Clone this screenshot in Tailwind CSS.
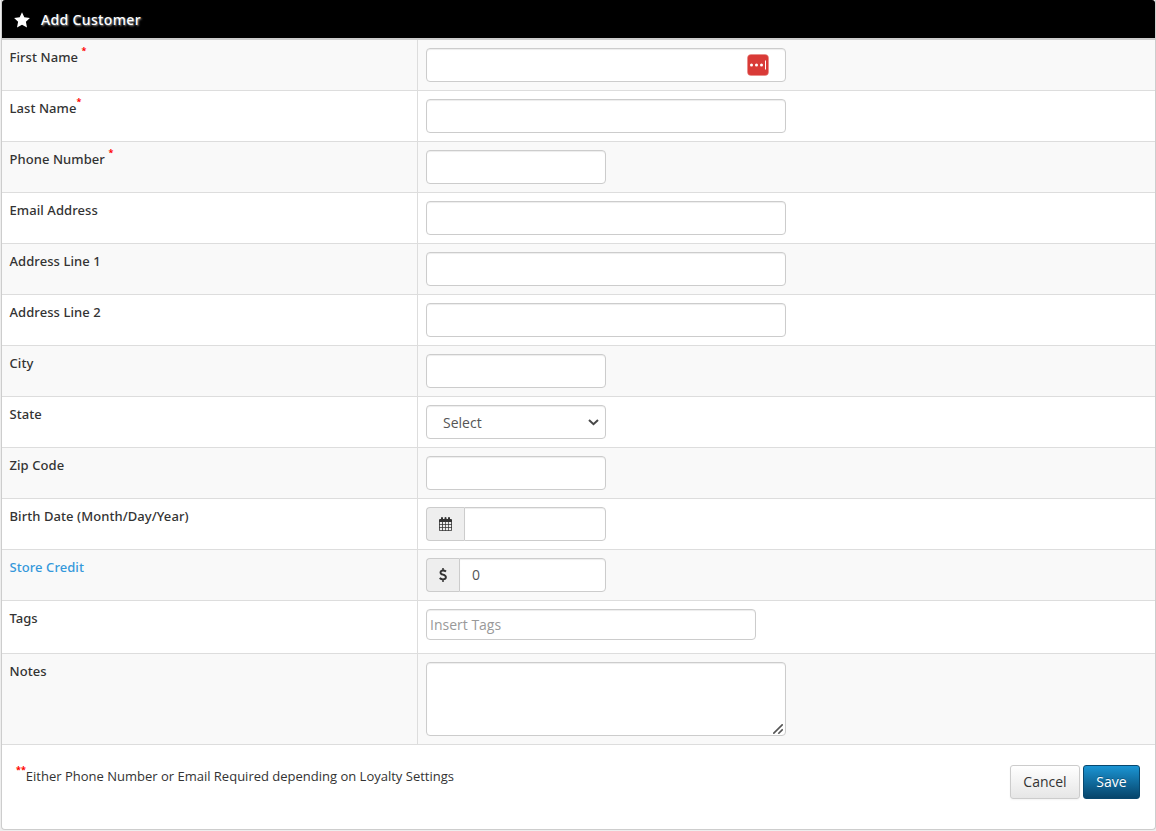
<!DOCTYPE html>
<html lang="en">
<head>
  <meta charset="UTF-8" />
  <meta name="viewport" content="width=device-width, initial-scale=1.0" />
  <title>Add Customer</title>
  <script src="https://cdn.jsdelivr.net/npm/@tailwindcss/browser@4"></script>
</head>
<body class="bg-[#eeeeee] font-['Open_Sans','Noto_Sans',sans-serif] text-[13px] leading-5 text-[#333333] h-[831px] overflow-hidden pl-px">

  <div class="h-[830px] border border-t-0 border-[#cdcdcd] rounded-b bg-white">

    <!-- Header -->
    <header class="h-10 bg-black border-b-2 border-[#cdcdcd] rounded-t-[3px] flex items-center pl-3">
      <svg class="w-4 h-4 mt-px" viewBox="0 0 16 16" fill="#fff"><path d="M8 .3l2.300 5 5.600.7-4 3.800 1.100 5.800L8 12.800l-5 2.800 1.100-5.800L.1 6l5.600-.7z" /></svg>
      <h1 class="ml-[11px] pt-px font-['Noto_Sans',sans-serif] text-[14px] tracking-[0.35px] font-medium text-white [text-shadow:1px_1px_2px_#999]">Add Customer</h1>
    </header>

    <!-- Form -->
    <form>
      <div class="flex h-[51px] border-b border-[#dddddd] bg-[#f9f9f9]">
        <label class="w-[416px] border-r border-[#dddddd] pl-[7.5px] pt-[7px] font-['Noto_Sans',sans-serif] tracking-[0.07px] font-medium">First Name <sup class="text-[#ff0000] text-[9px] font-bold -top-[8px]">*</sup></label>
        <div class="relative p-2">
          <input type="text" class="block w-[360px] h-[34px] border border-[#cccccc] rounded bg-white shadow-[inset_0_1px_1px_rgba(0,0,0,0.075)]" />
          <svg class="absolute left-[329px] top-[14px] w-[22px] h-[22px]" viewBox="0 0 22 22"><rect x=".5" y=".5" width="21" height="21" rx="3.5" fill="#d93a37" stroke="#e8827f" stroke-width=".5" /><g fill="#fff"><circle cx="4.500" cy="11" r="1.500" /><circle cx="9.500" cy="11" r="1.500" /><circle cx="14.500" cy="11" r="1.500" /><rect x="18" y="6.500" width="1" height="9" /></g></svg>
        </div>
      </div>
      <div class="flex h-[51px] border-b border-[#dddddd]">
        <label class="w-[416px] border-r border-[#dddddd] pl-[7.5px] pt-[7px] font-['Noto_Sans',sans-serif] tracking-[0.07px] font-medium">Last Name<sup class="text-[#ff0000] text-[9px] font-bold -top-[8px]">*</sup></label>
        <div class="p-2"><input type="text" class="block w-[360px] h-[34px] border border-[#cccccc] rounded bg-white shadow-[inset_0_1px_1px_rgba(0,0,0,0.075)]" /></div>
      </div>
      <div class="flex h-[51px] border-b border-[#dddddd] bg-[#f9f9f9]">
        <label class="w-[416px] border-r border-[#dddddd] pl-[7.5px] pt-[7px] font-['Noto_Sans',sans-serif] tracking-[0.07px] font-medium">Phone Number <sup class="text-[#ff0000] text-[9px] font-bold -top-[8px]">*</sup></label>
        <div class="p-2"><input type="text" class="block w-[180px] h-[34px] border border-[#cccccc] rounded bg-white shadow-[inset_0_1px_1px_rgba(0,0,0,0.075)]" /></div>
      </div>
      <div class="flex h-[51px] border-b border-[#dddddd]">
        <label class="w-[416px] border-r border-[#dddddd] pl-[7.5px] pt-[7px] font-['Noto_Sans',sans-serif] tracking-[0.07px] font-medium">Email Address</label>
        <div class="p-2"><input type="text" class="block w-[360px] h-[34px] border border-[#cccccc] rounded bg-white shadow-[inset_0_1px_1px_rgba(0,0,0,0.075)]" /></div>
      </div>
      <div class="flex h-[51px] border-b border-[#dddddd] bg-[#f9f9f9]">
        <label class="w-[416px] border-r border-[#dddddd] pl-[7.5px] pt-[7px] font-['Noto_Sans',sans-serif] tracking-[0.07px] font-medium">Address Line 1</label>
        <div class="p-2"><input type="text" class="block w-[360px] h-[34px] border border-[#cccccc] rounded bg-white shadow-[inset_0_1px_1px_rgba(0,0,0,0.075)]" /></div>
      </div>
      <div class="flex h-[51px] border-b border-[#dddddd]">
        <label class="w-[416px] border-r border-[#dddddd] pl-[7.5px] pt-[7px] font-['Noto_Sans',sans-serif] tracking-[0.07px] font-medium">Address Line 2</label>
        <div class="p-2"><input type="text" class="block w-[360px] h-[34px] border border-[#cccccc] rounded bg-white shadow-[inset_0_1px_1px_rgba(0,0,0,0.075)]" /></div>
      </div>
      <div class="flex h-[51px] border-b border-[#dddddd] bg-[#f9f9f9]">
        <label class="w-[416px] border-r border-[#dddddd] pl-[7.5px] pt-[7px] font-['Noto_Sans',sans-serif] tracking-[0.07px] font-medium">City</label>
        <div class="p-2"><input type="text" class="block w-[180px] h-[34px] border border-[#cccccc] rounded bg-white shadow-[inset_0_1px_1px_rgba(0,0,0,0.075)]" /></div>
      </div>
      <div class="flex h-[51px] border-b border-[#dddddd]">
        <label class="w-[416px] border-r border-[#dddddd] pl-[7.5px] pt-[7px] font-['Noto_Sans',sans-serif] tracking-[0.07px] font-medium">State</label>
        <div class="relative p-2">
          <select class="block appearance-none w-[180px] h-[34px] border border-[#cccccc] rounded bg-white pt-0.5 pl-4 text-[14px] text-[#555555] shadow-[inset_0_1px_1px_rgba(0,0,0,0.075)]">
            <option>Select</option>
          </select>
          <svg class="absolute left-[170px] top-[22px] w-[11px] h-[7px]" viewBox="0 0 11 7" fill="none" stroke="#484848" stroke-width="2"><path d="M1 1l4.500 4.200L10 1" /></svg>
        </div>
      </div>
      <div class="flex h-[51px] border-b border-[#dddddd] bg-[#f9f9f9]">
        <label class="w-[416px] border-r border-[#dddddd] pl-[7.5px] pt-[7px] font-['Noto_Sans',sans-serif] tracking-[0.07px] font-medium">Zip Code</label>
        <div class="p-2"><input type="text" class="block w-[180px] h-[34px] border border-[#cccccc] rounded bg-white shadow-[inset_0_1px_1px_rgba(0,0,0,0.075)]" /></div>
      </div>
      <div class="flex h-[51px] border-b border-[#dddddd]">
        <label class="w-[416px] border-r border-[#dddddd] pl-[7.5px] pt-[7px] font-['Noto_Sans',sans-serif] tracking-[0.07px] font-medium">Birth Date (Month/Day/Year)</label>
        <div class="flex p-2">
          <span class="w-[38px] h-[34px] border border-r-0 border-[#cccccc] rounded-l bg-[#eeeeee] flex items-center pl-3">
            <svg class="w-[13px] h-[14px]" viewBox="0 0 13 14"><path fill="#333" d="M1 2h1V1q0-1 1-1t1 1v1h1.500V1q0-1 1-1t1 1v1H9V1q0-1 1-1t1 1v1h1q1 0 1 1v10q0 1-1 1H1q-1 0-1-1V3q0-1 1-1z" /><path fill="#eee" d="M.8 5h2.300v2.200H.8zM3.900 5h2.300v2.200H3.900zM6.900 5h2.300v2.200H6.900zM9.900 5h2.300v2.200H9.900zM.8 8h2.300v2.200H.8zM3.900 8h2.300v2.200H3.900zM6.900 8h2.300v2.200H6.900zM9.900 8h2.300v2.200H9.900zM.8 11h2.300v2.200H.8zM3.900 11h2.300v2.200H3.900zM6.900 11h2.300v2.200H6.900zM9.900 11h2.300v2.200H9.900z" /></svg>
          </span>
          <input type="text" class="block w-[142px] h-[34px] border border-[#cccccc] rounded-r bg-white shadow-[inset_0_1px_1px_rgba(0,0,0,0.075)]" />
        </div>
      </div>
      <div class="flex h-[51px] border-b border-[#dddddd] bg-[#f9f9f9]">
        <label class="w-[416px] border-r border-[#dddddd] pl-[7.5px] pt-[7px] font-['Noto_Sans',sans-serif] tracking-[0.07px] font-medium text-[#3498db]">Store Credit</label>
        <div class="flex p-2">
          <span class="w-[33px] h-[34px] border border-r-0 border-[#cccccc] rounded-l bg-[#eeeeee] flex items-center justify-center">
            <svg class="w-[8px] h-[14px]" viewBox="0 0 8 14" fill="none" stroke="#333"><path stroke-width="1.900" d="M7 3.600Q5.700 2.500 4.100 2.500 1.500 2.500 1.500 4.400 1.500 6 4.100 6.700 6.900 7.500 6.900 9.300 6.900 11.400 4 11.400 2.100 11.400.7 10" /><path stroke-width="1.500" d="M4 0v2.500M4 11.400V14" /></svg>
          </span>
          <input type="text" value="0" class="block w-[147px] h-[34px] border border-[#cccccc] rounded-r bg-white px-3 pb-0.5 text-[14px] text-[#555555] shadow-[inset_0_1px_1px_rgba(0,0,0,0.075)]" />
        </div>
      </div>
      <div class="flex h-[53px] border-b border-[#dddddd]">
        <label class="w-[416px] border-r border-[#dddddd] pl-[7.5px] pt-[7px] font-['Noto_Sans',sans-serif] font-medium">Tags</label>
        <div class="p-2"><input type="text" placeholder="Insert Tags" class="block w-[330px] h-[31px] border border-[#cccccc] rounded bg-white px-[3px] text-[14px] placeholder:text-[#999999] shadow-[inset_0_1px_1px_rgba(0,0,0,0.075)]" /></div>
      </div>
      <div class="flex h-[91px] border-b border-[#dddddd] bg-[#f9f9f9]">
        <label class="w-[416px] border-r border-[#dddddd] pl-[7.5px] pt-[7px] font-['Noto_Sans',sans-serif] tracking-[0.07px] font-medium">Notes</label>
        <div class="relative p-2">
          <textarea class="block resize-none w-[360px] h-[74px] border border-[#cccccc] rounded bg-white shadow-[inset_0_1px_1px_rgba(0,0,0,0.075)]"></textarea>
          <svg class="absolute left-[355px] top-[70px] w-[10px] h-[10px]" viewBox="0 0 10 10" stroke="#555" stroke-width="1.600"><path d="M.3 9.700L9.700.3M5.300 9.700l4.400-4.400" /></svg>
        </div>
      </div>

      <!-- Actions -->
      <div class="flex justify-between pl-[14px] pr-[15px] pt-5">
        <p class="pt-px"><sup class="text-[#ff0000] text-[9px] font-bold -top-[8px]">**</sup>Either Phone Number or Email Required depending on Loyalty Settings</p>
        <div class="flex gap-[3px]">
          <button type="button" class="w-[70px] h-[34px] border border-[#cccccc] rounded-[3px] bg-linear-to-b from-white to-[#e6e6e6] text-[14px] text-[#333333] shadow-[0_1px_2px_rgba(0,0,0,0.05)]">Cancel</button>
          <button type="button" class="w-[57px] h-[34px] border border-[#08486f] rounded-[3px] bg-linear-to-b from-[#1b95d4] to-[#07456b] text-[14px] text-white [text-shadow:0_-1px_0_rgba(0,0,0,0.25)]">Save</button>
        </div>
      </div>
    </form>
  </div>

</body>
</html>
